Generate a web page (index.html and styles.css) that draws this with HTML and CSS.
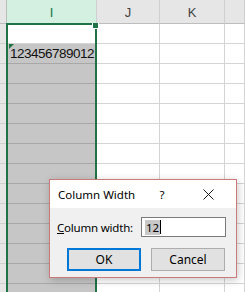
FILE: index.html
```html
<!DOCTYPE html>
<html lang="en">
<head>
  <meta charset="UTF-8">
  <title>Column Width</title>
  <link rel="stylesheet" href="styles.css">
</head>
<body>
  <div class="sheet">
    <div class="corner"></div><div class="col-head active">I</div><div class="col-head">J</div><div class="col-head">K</div><div class="col-head"></div>

    <div class="row-head"></div><div class="cell"></div><div class="cell"></div><div class="cell"></div><div class="cell"></div>
    <div class="row-head"></div><div class="cell sel num"><span class="flag"></span>123456789012</div><div class="cell"></div><div class="cell"></div><div class="cell"></div>
    <div class="row-head"></div><div class="cell sel"></div><div class="cell"></div><div class="cell"></div><div class="cell"></div>
    <div class="row-head"></div><div class="cell sel"></div><div class="cell"></div><div class="cell"></div><div class="cell"></div>
    <div class="row-head"></div><div class="cell sel"></div><div class="cell"></div><div class="cell"></div><div class="cell"></div>
    <div class="row-head"></div><div class="cell sel"></div><div class="cell"></div><div class="cell"></div><div class="cell"></div>
    <div class="row-head"></div><div class="cell sel"></div><div class="cell"></div><div class="cell"></div><div class="cell"></div>
    <div class="row-head"></div><div class="cell sel"></div><div class="cell"></div><div class="cell"></div><div class="cell"></div>
    <div class="row-head"></div><div class="cell sel"></div><div class="cell"></div><div class="cell"></div><div class="cell"></div>
    <div class="row-head"></div><div class="cell sel"></div><div class="cell"></div><div class="cell"></div><div class="cell"></div>
    <div class="row-head"></div><div class="cell sel"></div><div class="cell"></div><div class="cell"></div><div class="cell"></div>
    <div class="row-head"></div><div class="cell sel"></div><div class="cell"></div><div class="cell"></div><div class="cell"></div>
    <div class="row-head"></div><div class="cell sel"></div><div class="cell"></div><div class="cell"></div><div class="cell"></div>
    <div class="row-head"></div><div class="cell sel"></div><div class="cell"></div><div class="cell"></div><div class="cell"></div>

    <div class="selection"><span class="handle"></span></div>
  </div>

  <div class="dialog">
    <div class="title-bar">
      <span class="title">Column Width</span>
      <span class="help">?</span>
      <svg class="close" width="11" height="11" viewBox="0 0 11 11">
        <path d="M0.5 0.5 L10.5 10.5 M10.5 0.5 L0.5 10.5" stroke="#1a1a1a" stroke-width="1" fill="none"/>
      </svg>
    </div>
    <div class="dialog-body">
      <div class="field">
        <label class="label"><u>C</u>olumn width:</label>
        <div class="input"><span class="picked">12</span><span class="caret"></span></div>
      </div>
      <div class="buttons">
        <button class="btn default">OK</button>
        <button class="btn">Cancel</button>
      </div>
    </div>
  </div>
</body>
</html>
```

FILE: styles.css
```css
body {
  margin: 0;
  width: 245px;
  height: 292px;
  overflow: hidden;
  background: #ffffff;
  font-family: 'Liberation Sans', Arial, sans-serif;
  position: relative;
}
.sheet {
  position: relative;
  height: 292px;
  overflow: hidden;
  display: grid;
  grid-template-columns: 7px 90px 63px 65px 20px;
  grid-template-rows: 24px repeat(14, 20px);
}
.corner,
.row-head {
  background: #e6e6e6;
  border-right: 1px solid #bdbdbd;
  border-bottom: 1px solid #d0d0d0;
  box-sizing: border-box;
}
.corner {
  border-bottom-color: #bdbdbd;
}
.col-head {
  background: #e6e6e6;
  border-right: 1px solid #cfcfcf;
  border-bottom: 1px solid #bdbdbd;
  box-sizing: border-box;
  color: #444444;
  font-size: 13px;
  display: flex;
  align-items: center;
  justify-content: center;
  padding-top: 2px;
}
.col-head.active {
  background: #d3f0e0;
  color: #217346;
}
.cell {
  position: relative;
  border-right: 1px solid #d4d4d4;
  border-bottom: 1px solid #d4d4d4;
  box-sizing: border-box;
}
.cell.sel {
  background: #c6c6c6;
  border-bottom-color: #a8a8a8;
  border-right-color: #c6c6c6;
}
.num {
  font-size: 13.5px;
  letter-spacing: -0.5px;
  color: #111111;
  padding: 2px 0 0 3px;
  white-space: nowrap;
}
.flag {
  position: absolute;
  left: 2px;
  top: 0;
  width: 0;
  height: 0;
  border-top: 5px solid #217346;
  border-right: 5px solid transparent;
}
.selection {
  position: absolute;
  left: 6px;
  top: 23px;
  width: 91px;
  height: 269px;
  border: 2px solid #217346;
  border-bottom: none;
  box-sizing: border-box;
}
.handle {
  position: absolute;
  right: -4px;
  top: -2px;
  width: 5px;
  height: 5px;
  background: #217346;
  border: 1px solid #ffffff;
  border-top: none;
}

.dialog {
  position: absolute;
  left: 49px;
  top: 179px;
  width: 188px;
  height: 99px;
  box-sizing: border-box;
  border: 1px solid #c97a7a;
  background: #f0f0f0;
  box-shadow: 1px 2px 8px rgba(0,0,0,0.22);
  font-family: 'Noto Sans', 'Liberation Sans', sans-serif;
  font-size: 11.5px;
  color: #000000;
  display: flex;
  flex-direction: column;
}
.title-bar {
  height: 28px;
  background: #ffffff;
  display: flex;
  align-items: center;
  padding-left: 8px;
}
.title {
  flex: 1;
}
.help {
  width: 10px;
  margin-right: 36px;
  text-align: center;
}
.close {
  margin-right: 22px;
}
.dialog-body {
  flex: 1;
  padding: 9px 10px 6px 7px;
  display: flex;
  flex-direction: column;
}
.field {
  display: flex;
  justify-content: space-between;
  align-items: center;
}
.label {
  letter-spacing: -0.2px;
}
.input {
  width: 85px;
  height: 20px;
  box-sizing: border-box;
  border: 1px solid #7a7a7a;
  background: #ffffff;
  display: flex;
  align-items: center;
  padding-left: 3px;
}
.picked {
  background: #c8c8c8;
  padding: 0 1px;
  line-height: 15px;
}
.caret {
  width: 1px;
  height: 14px;
  background: #000000;
}
.buttons {
  margin-top: 11px;
  margin-right: 1px;
  display: flex;
  justify-content: flex-end;
  gap: 10px;
}
.btn {
  width: 74px;
  height: 23px;
  box-sizing: border-box;
  border: 1px solid #adadad;
  background: #e1e1e1;
  font-family: inherit;
  font-size: 12px;
  color: #000000;
  padding: 0;
}
.btn.default {
  border: 2px solid #0078d7;
}
```
